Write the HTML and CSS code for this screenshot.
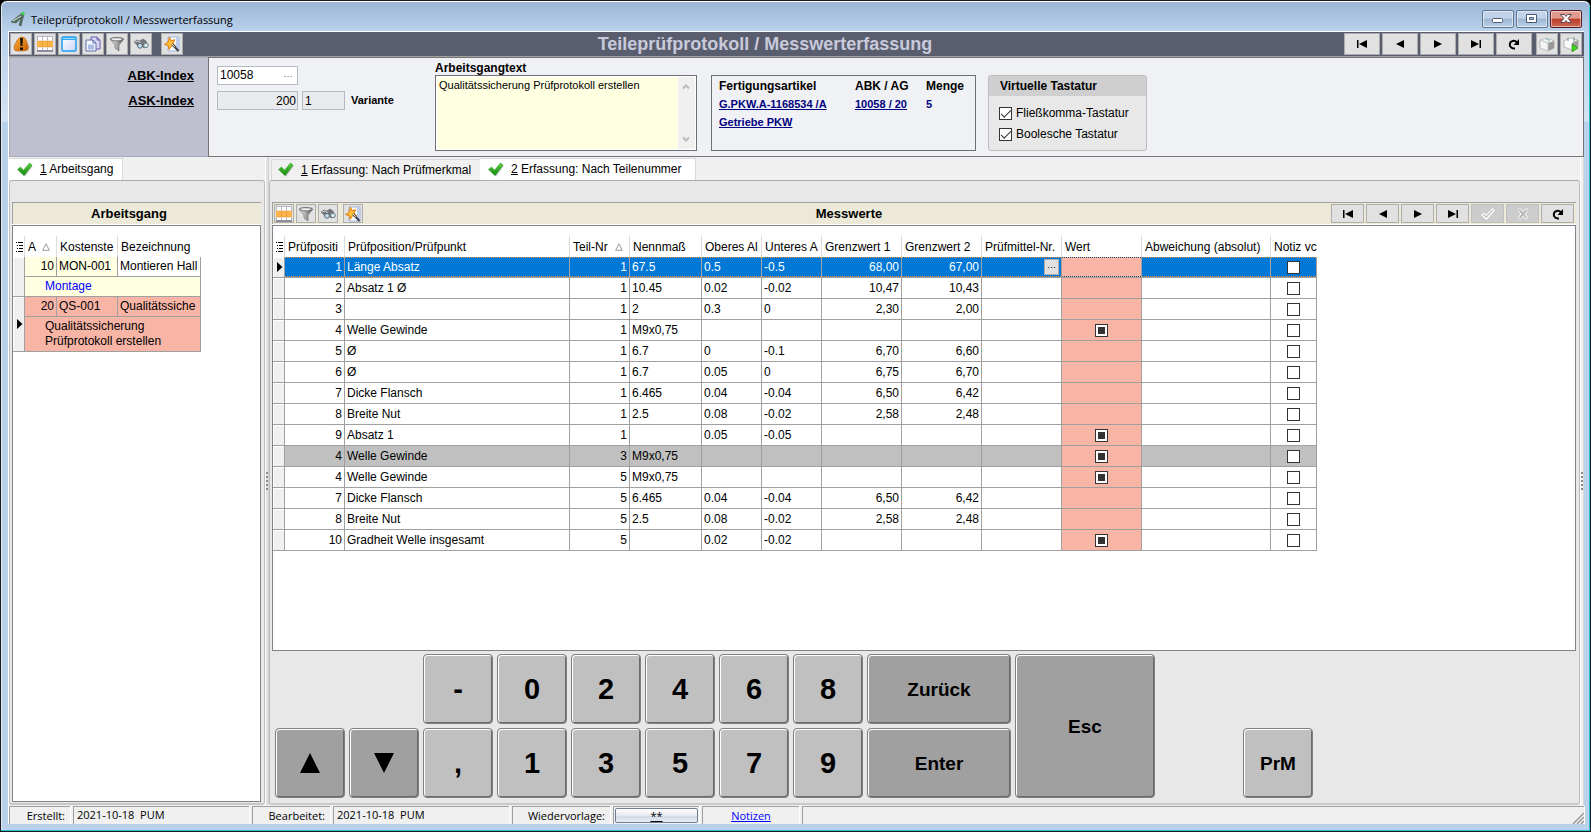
FILE: index.html
```html
<!DOCTYPE html>
<html lang="de">
<head>
<meta charset="utf-8">
<title>Teileprüfprotokoll / Messwerterfassung</title>
<link rel="stylesheet" href="styles.css">
</head>
<body>
<svg class="sprite" aria-hidden="true">
  <defs>
    <linearGradient id="g-orange" x1="0" y1="0" x2="1" y2="1"><stop offset="0" stop-color="#ffb13c"/><stop offset="1" stop-color="#c95c00"/></linearGradient>
    <linearGradient id="g-metal" x1="0" y1="0" x2="1" y2="0"><stop offset="0" stop-color="#f4f4f4"/><stop offset="1" stop-color="#5a5a5a"/></linearGradient>
    <linearGradient id="g-page" x1="0" y1="0" x2="1" y2="1"><stop offset="0" stop-color="#ffffff"/><stop offset="1" stop-color="#c9d6fb"/></linearGradient>
    <linearGradient id="g-check" x1="0" y1="0" x2="0" y2="1"><stop offset="0" stop-color="#5fd045"/><stop offset="1" stop-color="#128a0c"/></linearGradient>
  </defs>
  <symbol id="i-alert" viewBox="0 0 16 16"><path d="M2 14.500C.5 12 1 9.500 3 6.500 4.500 3 6.500 1 9 1c3 0 4 2.500 5 5.500 1 3 2 5 .500 7.500-3.500 1.300-9 1.300-12.500.500z" fill="url(#g-orange)" stroke="#a85a08" stroke-width=".6"/><path d="M7 2h3l-.6 8H7.600zM7 11.500h3V14H7z" fill="#17120a"/></symbol>
  <symbol id="i-table" viewBox="0 0 16 16"><path d="M0 0h16v16H0z" fill="#fff"/><path d="M0 5h16v6H0z" fill="#fdb54a"/><path d="M5.500 5v6M10.500 5v6M0 5h16M0 11h16" stroke="#d88a2c" stroke-width=".7" opacity=".7"/><path d="M.5 0v4.500M5.500 0v4.500M10.500 0v4.500M15.500 0v4.500M.500 11.500V16M5.500 11.500V16M10.500 11.500V16M15.500 11.500V16M0 .500h16" stroke="#b9b5c4" fill="none"/><path d="M0 15h16" stroke="#8f8b99" stroke-width="2"/></symbol>
  <symbol id="i-window" viewBox="0 0 16 16"><rect x="1" y="1" width="14" height="14" rx="1" fill="url(#g-page)" stroke="#1f9cf0" stroke-width="1.500"/><path d="M1 1h14v3H1z" fill="#34a9f6"/><path d="M2 2.500h12" stroke="#9fd8ff"/></symbol>
  <symbol id="i-copy" viewBox="0 0 16 16"><path d="M6 1h6l3 3v9H6z" fill="#d9d7f3" stroke="#6a5da8"/><path d="M12 1v3h3" fill="none" stroke="#6a5da8"/><path d="M1 4h7l3 3v8H1z" fill="#f4f7ff" stroke="#5c6ea6"/><path d="M8 4v3h3" fill="none" stroke="#5c6ea6"/><path d="M3 8.500h6v5H3z" fill="#a9bde3"/></symbol>
  <symbol id="i-funnel" viewBox="0 0 16 16"><path d="M1.500 3.500 6 9v3l4 3V9l4.500-5.500z" fill="url(#g-metal)" stroke="#666" stroke-width=".6"/><ellipse cx="8" cy="3.200" rx="6.600" ry="1.800" fill="#9b9b9b" stroke="#666" stroke-width=".8"/><ellipse cx="7.500" cy="3.200" rx="4.800" ry="1" fill="#ececec"/></symbol>
  <symbol id="i-binoc" viewBox="0 0 16 16"><path d="M1 6 4 4l3 1 3-2 3 2 2 5-4 2-3-3-3 1z" fill="#73777c" stroke="#555" stroke-width=".5"/><path d="m2 6 3-1 3 2" fill="none" stroke="#d5d8db"/><circle cx="7" cy="9.800" r="2.400" fill="#bfe0ef" stroke="#59656c"/><circle cx="13" cy="9.400" r="2.300" fill="#d4edf7" stroke="#6d7a81"/></symbol>
  <symbol id="i-wizard" viewBox="0 0 16 16"><path d="M4 1h11v14H4z" fill="#fbfcff" stroke="#a4b6da"/><path d="M12 1h3v14h-3z" fill="#bdcdf0"/><path d="m5.500 1 1.300 3.600 4-.8-2 3.200 2.600 2.700-3.900.2L5 13.500 4.400 9.600.5 8.500l3.300-1.900z" fill="#ffc03a" stroke="#dc7d0c"/><path d="m8 8 6.500 7" stroke="#3c3f46" stroke-width="2"/><path d="m8 8 2.500 2.700" stroke="#f5f5f5" stroke-width="1"/></symbol>
  <symbol id="i-first" viewBox="0 0 16 16"><path d="M3 4h1.500v8H3zM13 4v8L5 8z"/></symbol>
  <symbol id="i-prev" viewBox="0 0 16 16"><path d="M12 4v8L4 8z"/></symbol>
  <symbol id="i-next" viewBox="0 0 16 16"><path d="M4 4v8l8-4z"/></symbol>
  <symbol id="i-last" viewBox="0 0 16 16"><path d="M3 4v8l8-4zM11.500 4H13v8h-1.500z"/></symbol>
  <symbol id="i-reload" viewBox="0 0 16 16"><path d="M9 12.500C5 13 3.500 10 3.800 8c.5-3 4.500-4.500 7.200-1.500" fill="none" stroke="#000" stroke-width="2"/><path d="M13 3v6H7.500z"/></symbol>
  <symbol id="i-cube" viewBox="0 0 16 16"><path d="m1 4 7-2 7 3v7l-6 3-8-3z" fill="#f4f4f4" stroke="#aaa" stroke-width=".7"/><path d="m9 7 6-2v7l-6 3z" fill="#989898"/><path d="m1 4 8 3v8" fill="none" stroke="#bdbdbd"/><path d="m7 3 3 1v2" stroke="#7fb9c9" fill="none"/></symbol>
  <symbol id="i-cube-run" viewBox="0 0 16 16"><path d="m1 5 6-3 8 2v7l-6 3-8-3z" fill="#fafafa" stroke="#a3a3a3" stroke-width=".7"/><path d="m9 7 6-3v8l-6 2z" fill="#9d9d9d"/><path d="M5 2v3M11 1v5" stroke="#6f9c9a"/><path d="M9 8v8l6-4z" fill="#45d321" stroke="#1f8d12" stroke-width=".7"/></symbol>
  <symbol id="i-tick" viewBox="0 0 16 16"><path d="m1.500 8.500 3-2L7 9l6.500-7.500L15.500 4 8 14.500z" fill="#555" opacity=".4"/><path d="M.5 7.500 3.500 5 6.500 8.300 12.500 1 15 3.300 7 13.500z" fill="url(#g-check)" stroke="#178a12" stroke-width=".5"/></symbol>
  <symbol id="i-ok" viewBox="0 0 16 16"><path d="m2 9 2-1.500L6 10l6.500-7L14 4.500 6.500 13z" fill="none" stroke="#fff" stroke-width="1.300"/><path d="m3 9 1-.500 2 2.500 6.500-7" fill="none" stroke="#aaa" stroke-width=".8"/></symbol>
  <symbol id="i-no" viewBox="0 0 16 16"><path d="m3 4.500 2-2 3 3 3-3 2 2L10 8l3 3.500-2 2-3-3-3 3-2-2L6 8z" fill="#c4c4c4" stroke="#fff"/><path d="m4 4 3 3.500M12 4 5 12" stroke="#aaa" stroke-width=".8"/></symbol>
  <symbol id="i-list" viewBox="0 0 7 10"><path d="M0 .5h1M2 .5h5M1 3.500h1M3 3.500h4M1 6.500h1M3 6.500h4M0 9.500h1M2 9.500h5" stroke="#000"/></symbol>
  <symbol id="i-sort" viewBox="0 0 8 8"><path d="M4 .8 7.300 7.300H.7z" fill="none" stroke="#999"/></symbol>
  <symbol id="i-row" viewBox="0 0 6 10"><path d="M0 0v10l5.500-5z"/></symbol>
</svg>

<div class="window">
  <header class="titlebar">
    <svg class="app-icon" viewBox="0 0 16 16" aria-hidden="true"><path d="M1 11 12 2l2 1-3 12-2-1 2-7-5 5z" fill="#58705f" stroke="#405348" stroke-width=".6"/><path d="m3 10 8-5" stroke="#d8e7dd"/><circle cx="13" cy="2.500" r="1.700" fill="#39d353"/></svg>
    <span class="titlebar-text">Teileprüfprotokoll / Messwerterfassung</span>
    <div class="window-buttons">
      <button class="wbtn" aria-label="Minimieren"><svg viewBox="0 0 30 16"><rect x="9.500" y="7.500" width="10" height="4" rx="1" fill="#fff" stroke="#4b5a70"/></svg></button>
      <button class="wbtn" aria-label="Maximieren"><svg viewBox="0 0 30 16"><path d="M9.500 3.500h10v8h-10zm3 3v2h4v-2z" fill="#fff" fill-rule="evenodd" stroke="#4b5a70"/></svg></button>
      <button class="wbtn wbtn-close" aria-label="Schließen"><svg viewBox="0 0 30 16"><path d="M9.500 3.500h4l1.500 2 1.500-2h4L17 7.500l3.500 4h-4l-1.500-2-1.500 2h-4l3.500-4z" fill="#fff" stroke="#5a4a55"/></svg></button>
    </div>
  </header>

  <div class="client">
    <div class="toolbar">
      <div class="tools">
        <button class="tool" aria-label="Hinweis"><svg><use href="#i-alert"/></svg></button>
        <button class="tool" aria-label="Tabelle"><svg><use href="#i-table"/></svg></button>
        <button class="tool" aria-label="Fenster"><svg><use href="#i-window"/></svg></button>
        <button class="tool" aria-label="Kopieren"><svg><use href="#i-copy"/></svg></button>
        <button class="tool" aria-label="Filter"><svg><use href="#i-funnel"/></svg></button>
        <button class="tool" aria-label="Suchen"><svg><use href="#i-binoc"/></svg></button>
        <button class="tool tool-apart" aria-label="Assistent"><svg><use href="#i-wizard"/></svg></button>
      </div>
      <h1 class="toolbar-title">Teileprüfprotokoll / Messwerterfassung</h1>
      <div class="tools tools-end">
        <button class="tool tool-nav" aria-label="Erster"><svg><use href="#i-first"/></svg></button>
        <button class="tool tool-nav" aria-label="Zurück"><svg><use href="#i-prev"/></svg></button>
        <button class="tool tool-nav" aria-label="Weiter"><svg><use href="#i-next"/></svg></button>
        <button class="tool tool-nav" aria-label="Letzter"><svg><use href="#i-last"/></svg></button>
        <button class="tool tool-nav" aria-label="Aktualisieren"><svg><use href="#i-reload"/></svg></button>
        <button class="tool tool-cube" aria-label="Modul"><svg><use href="#i-cube"/></svg></button>
        <button class="tool" aria-label="Modul starten"><svg><use href="#i-cube-run"/></svg></button>
      </div>
    </div>

    <div class="head">
      <div class="head-labels">
        <label for="abk">ABK-Index</label>
        <label for="ask">ASK-Index</label>
      </div>
      <div class="head-body">
        <div class="index-fields">
          <div class="field-row">
            <div class="lookup"><input id="abk" value="10058"><button aria-label="Auswählen">···</button></div>
          </div>
          <div class="field-row">
            <input id="ask" class="ro ro-num" value="200" readonly>
            <input id="var" class="ro ro-var" value="1" readonly>
            <label for="var" class="var-label">Variante</label>
          </div>
        </div>
        <div class="memo-block">
          <label for="memo">Arbeitsgangtext</label>
          <div class="memo">
            <textarea id="memo">Qualitätssicherung Prüfprotokoll erstellen</textarea>
            <div class="memo-scroll" aria-hidden="true">
              <svg viewBox="0 0 8 6"><path d="m1 4.500 3-3 3 3" fill="none" stroke="#bbb" stroke-width="2"/></svg>
              <svg viewBox="0 0 8 6"><path d="m1 1.500 3 3 3-3" fill="none" stroke="#bbb" stroke-width="2"/></svg>
            </div>
          </div>
        </div>
        <div class="article">
          <span>Fertigungsartikel</span><span>ABK / AG</span><span>Menge</span>
          <a href="#artikel">G.PKW.A-1168534 /A</a><a href="#abk">10058 / 20</a><span class="qty">5</span>
          <a href="#bezeichnung">Getriebe PKW</a>
        </div>
        <fieldset class="vk">
          <legend>Virtuelle Tastatur</legend>
          <label><input type="checkbox" class="cb" checked>Fließkomma-Tastatur</label>
          <label><input type="checkbox" class="cb" checked>Boolesche Tastatur</label>
        </fieldset>
      </div>
    </div>

    <main class="main">
      <section class="side">
        <nav class="tabs"><button class="tab active"><svg><use href="#i-tick"/></svg><span><u>1</u> Arbeitsgang</span></button></nav>
        <div class="page">
          <div class="grid-title"><h2>Arbeitsgang</h2></div>
          <div class="grid-box">
            <table class="grid ops">
              <colgroup><col class="c-ind"><col class="c-a"><col class="c-ks"><col class="c-bez"></colgroup>
              <thead><tr><th class="ind"><svg><use href="#i-list"/></svg></th><th><div class="sorted"><span>A</span><svg><use href="#i-sort"/></svg></div></th><th>Kostenste</th><th class="end">Bezeichnung</th></tr></thead>
              <tbody>
                <tr class="yellow"><td class="ind" rowspan="2"></td><td class="r">10</td><td>MON-001</td><td class="white">Montieren Hall</td></tr>
                <tr class="yellow"><td class="note blue" colspan="3">Montage</td></tr>
                <tr class="red"><td class="ind" rowspan="2"><svg><use href="#i-row"/></svg></td><td class="r">20</td><td>QS-001</td><td>Qualitätssiche</td></tr>
                <tr class="red"><td class="note tall" colspan="3">Qualitätssicherung<br>Prüfprotokoll erstellen</td></tr>
              </tbody>
            </table>
          </div>
        </div>
      </section>

      <div class="splitter"><i></i><i></i><i></i><i></i><i></i></div>

      <section class="work">
        <nav class="tabs">
          <button class="tab"><svg><use href="#i-tick"/></svg><span><u>1</u> Erfassung: Nach Prüfmerkmal</span></button>
          <button class="tab active"><svg><use href="#i-tick"/></svg><span><u>2</u> Erfassung: Nach Teilenummer</span></button>
        </nav>
        <div class="page">
          <div class="grid-title">
            <div class="gtools">
              <button class="gtool" aria-label="Tabelle"><svg><use href="#i-table"/></svg></button>
              <button class="gtool" aria-label="Filter"><svg><use href="#i-funnel"/></svg></button>
              <button class="gtool" aria-label="Suchen"><svg><use href="#i-binoc"/></svg></button>
              <button class="gtool tool-wiz" aria-label="Assistent"><svg><use href="#i-wizard"/></svg></button>
            </div>
            <h2>Messwerte</h2>
            <div class="gtools gtools-end">
              <button class="gtool gnav" aria-label="Erster"><svg><use href="#i-first"/></svg></button>
              <button class="gtool gnav" aria-label="Zurück"><svg><use href="#i-prev"/></svg></button>
              <button class="gtool gnav" aria-label="Weiter"><svg><use href="#i-next"/></svg></button>
              <button class="gtool gnav" aria-label="Letzter"><svg><use href="#i-last"/></svg></button>
              <button class="gtool gnav" aria-label="Übernehmen" disabled><svg><use href="#i-ok"/></svg></button>
              <button class="gtool gnav" aria-label="Verwerfen" disabled><svg><use href="#i-no"/></svg></button>
              <button class="gtool gnav" aria-label="Aktualisieren"><svg><use href="#i-reload"/></svg></button>
            </div>
          </div>
          <div class="grid-box">
            <table class="grid values">
              <colgroup><col class="c-ind"><col class="c60"><col class="c225"><col class="c60"><col class="c72"><col class="c60"><col class="c60"><col class="c80"><col class="c80"><col class="c80"><col class="c80"><col class="c129"><col class="c46"></colgroup>
              <thead><tr><th class="ind"><svg><use href="#i-list"/></svg></th><th>Prüfpositi</th><th>Prüfposition/Prüfpunkt</th><th><div class="sorted"><span>Teil-Nr</span><svg><use href="#i-sort"/></svg></div></th><th>Nennmaß</th><th>Oberes Al</th><th>Unteres A</th><th>Grenzwert 1</th><th>Grenzwert 2</th><th>Prüfmittel-Nr.</th><th>Wert</th><th>Abweichung (absolut)</th><th class="end">Notiz vc</th></tr></thead>
              <tbody>
                <tr class="selected"><td class="ind"><svg><use href="#i-row"/></svg></td><td class="r">1</td><td>Länge Absatz</td><td class="r">1</td><td>67.5</td><td>0.5</td><td>-0.5</td><td class="r">68,00</td><td class="r">67,00</td><td class="pick"><button aria-label="Prüfmittel wählen">···</button></td><td class="wert"></td><td></td><td class="c"><input type="checkbox" class="cb" aria-label="Notiz"></td></tr>
                <tr><td class="ind"></td><td class="r">2</td><td>Absatz 1 Ø</td><td class="r">1</td><td>10.45</td><td>0.02</td><td>-0.02</td><td class="r">10,47</td><td class="r">10,43</td><td></td><td class="wert"></td><td></td><td class="c"><input type="checkbox" class="cb" aria-label="Notiz"></td></tr>
                <tr><td class="ind"></td><td class="r">3</td><td></td><td class="r">1</td><td>2</td><td>0.3</td><td>0</td><td class="r">2,30</td><td class="r">2,00</td><td></td><td class="wert"></td><td></td><td class="c"><input type="checkbox" class="cb" aria-label="Notiz"></td></tr>
                <tr><td class="ind"></td><td class="r">4</td><td>Welle Gewinde</td><td class="r">1</td><td>M9x0,75</td><td></td><td></td><td></td><td></td><td></td><td class="wert"><input type="checkbox" class="cb tri" aria-label="Wert"></td><td></td><td class="c"><input type="checkbox" class="cb" aria-label="Notiz"></td></tr>
                <tr><td class="ind"></td><td class="r">5</td><td>Ø</td><td class="r">1</td><td>6.7</td><td>0</td><td>-0.1</td><td class="r">6,70</td><td class="r">6,60</td><td></td><td class="wert"></td><td></td><td class="c"><input type="checkbox" class="cb" aria-label="Notiz"></td></tr>
                <tr><td class="ind"></td><td class="r">6</td><td>Ø</td><td class="r">1</td><td>6.7</td><td>0.05</td><td>0</td><td class="r">6,75</td><td class="r">6,70</td><td></td><td class="wert"></td><td></td><td class="c"><input type="checkbox" class="cb" aria-label="Notiz"></td></tr>
                <tr><td class="ind"></td><td class="r">7</td><td>Dicke Flansch</td><td class="r">1</td><td>6.465</td><td>0.04</td><td>-0.04</td><td class="r">6,50</td><td class="r">6,42</td><td></td><td class="wert"></td><td></td><td class="c"><input type="checkbox" class="cb" aria-label="Notiz"></td></tr>
                <tr><td class="ind"></td><td class="r">8</td><td>Breite Nut</td><td class="r">1</td><td>2.5</td><td>0.08</td><td>-0.02</td><td class="r">2,58</td><td class="r">2,48</td><td></td><td class="wert"></td><td></td><td class="c"><input type="checkbox" class="cb" aria-label="Notiz"></td></tr>
                <tr><td class="ind"></td><td class="r">9</td><td>Absatz 1</td><td class="r">1</td><td></td><td>0.05</td><td>-0.05</td><td></td><td></td><td></td><td class="wert"><input type="checkbox" class="cb tri" aria-label="Wert"></td><td></td><td class="c"><input type="checkbox" class="cb" aria-label="Notiz"></td></tr>
                <tr class="gray"><td class="ind"></td><td class="r">4</td><td>Welle Gewinde</td><td class="r">3</td><td>M9x0,75</td><td></td><td></td><td></td><td></td><td></td><td class="wert"><input type="checkbox" class="cb tri" aria-label="Wert"></td><td></td><td class="c"><input type="checkbox" class="cb" aria-label="Notiz"></td></tr>
                <tr><td class="ind"></td><td class="r">4</td><td>Welle Gewinde</td><td class="r">5</td><td>M9x0,75</td><td></td><td></td><td></td><td></td><td></td><td class="wert"><input type="checkbox" class="cb tri" aria-label="Wert"></td><td></td><td class="c"><input type="checkbox" class="cb" aria-label="Notiz"></td></tr>
                <tr><td class="ind"></td><td class="r">7</td><td>Dicke Flansch</td><td class="r">5</td><td>6.465</td><td>0.04</td><td>-0.04</td><td class="r">6,50</td><td class="r">6,42</td><td></td><td class="wert"></td><td></td><td class="c"><input type="checkbox" class="cb" aria-label="Notiz"></td></tr>
                <tr><td class="ind"></td><td class="r">8</td><td>Breite Nut</td><td class="r">5</td><td>2.5</td><td>0.08</td><td>-0.02</td><td class="r">2,58</td><td class="r">2,48</td><td></td><td class="wert"></td><td></td><td class="c"><input type="checkbox" class="cb" aria-label="Notiz"></td></tr>
                <tr><td class="ind"></td><td class="r">10</td><td>Gradheit Welle insgesamt</td><td class="r">5</td><td></td><td>0.02</td><td>-0.02</td><td></td><td></td><td></td><td class="wert"><input type="checkbox" class="cb tri" aria-label="Wert"></td><td></td><td class="c"><input type="checkbox" class="cb" aria-label="Notiz"></td></tr>
              </tbody>
            </table>
          </div>
          <div class="keypad">
            <button class="key k-first">-</button><button class="key">0</button><button class="key">2</button><button class="key">4</button><button class="key">6</button><button class="key">8</button><button class="key dark word">Zurück</button><button class="key dark word k-esc">Esc</button>
            <button class="key dark k-up" aria-label="Hoch"><svg viewBox="0 0 20 20"><path d="M10 0 20 20H0z"/></svg></button><button class="key dark" aria-label="Runter"><svg viewBox="0 0 20 20"><path d="M0 0h20L10 20z"/></svg></button><button class="key">,</button><button class="key">1</button><button class="key">3</button><button class="key">5</button><button class="key">7</button><button class="key">9</button><button class="key dark word">Enter</button><button class="key word k-prm">PrM</button>
          </div>
        </div>
      </section>
      <div class="splitter splitter-end"><i></i><i></i><i></i><i></i><i></i></div>
    </main>

    <footer class="status">
      <span class="s-label s1">Erstellt:</span>
      <span class="s-value">2021-10-18&nbsp; PUM</span>
      <span class="s-label s2">Bearbeitet:</span>
      <span class="s-value">2021-10-18&nbsp; PUM</span>
      <span class="s-label s3">Wiedervorlage:</span>
      <span class="s-btn"><button>**</button></span>
      <span class="s-link"><a href="#notizen">Notizen</a></span>
      <span class="s-rest"><svg viewBox="0 0 12 12"><path d="M1 12 12 1M5 12l7-7M9 12l3-3" stroke="#999" stroke-width="1.500"/></svg></span>
    </footer>
  </div>
</div>
</body>
</html>
```
FILE: styles.css
```css
* { box-sizing: border-box; }

body {
  margin: 0;
  background: #000;
  color: #000;
  font: 12px/15px "Liberation Sans", Arial, sans-serif;
}

button, input, textarea { font: inherit; color: inherit; margin: 0; }
button { padding: 0; }
h1, h2 { margin: 0; }
.sprite { position: absolute; width: 0; height: 0; }

/* window frame */
.window {
  display: flex;
  flex-direction: column;
  min-height: 100vh;
  padding: 0 6px 7px 7px;
  border: 1px solid #1a1a1a;
  border-radius: 7px 7px 0 0;
  box-shadow: inset 0 1px #fff, inset -1px -1px #22c4d8, inset 1px 0 #dce9f6;
  background: linear-gradient(#9ab4d4, #b9d1ea 30px, #d5e3f3 120px, #b9d1ea 121px);
}

.titlebar {
  display: flex;
  align-items: center;
  height: 30px;
  padding: 6px 2px 0;
  font: 11px/16px "Open Sans", "Noto Sans", sans-serif;
}
.titlebar-text { margin-top: 2px; }
.app-icon { width: 16px; height: 16px; margin-right: 5px; }
.window-buttons { display: flex; gap: 2px; margin-left: auto; }
.wbtn {
  display: block;
  width: 32px;
  height: 18px;
  border: 1px solid #5f7793;
  border-radius: 2px;
  box-shadow: inset 0 0 0 1px rgba(255, 255, 255, .5);
  background: linear-gradient(#c1d3e8 45%, #9db5d1 50%, #bcd2ea);
}
.wbtn svg { display: block; width: 30px; height: 16px; }
.wbtn-close { border-color: #5a1a20; background: linear-gradient(#e09b8e 45%, #bb3a28 50%, #cc6a55); }

.client {
  display: flex;
  flex: 1;
  flex-direction: column;
  border: solid #fff;
  border-width: 1px 0 0 1px;
  background: #f0f0f0;
}

/* main toolbar */
.toolbar {
  display: flex;
  align-items: center;
  height: 25px;
  padding: 0 2px 0 1px;
  border-bottom: 1px solid #a0a0a0;
  background: #5a5d6d;
}
.toolbar-title {
  flex: 1;
  padding-right: 60px;
  color: #c8cadb;
  font-size: 18px;
  line-height: 24px;
  text-align: center;
}
.tools { display: flex; flex: 0 0 236px; gap: 2px; }
.tools-end { justify-content: flex-end; }
.tool {
  display: flex;
  align-items: center;
  justify-content: center;
  width: 22px;
  height: 22px;
  border: 1px solid #adadad;
  background: #e1e1e1;
}
.tool svg, .gtool svg { width: 16px; height: 16px; }
.tool-apart { margin-left: 7px; }
.tool-nav { width: 36px; }
.tool-cube { margin-left: 2px; }

/* header area */
.head { display: flex; min-height: 100px; }
.head-labels {
  display: flex;
  flex: 0 0 199px;
  flex-direction: column;
  gap: 9px;
  padding: 10px 14px 0 0;
  border: 1px solid #a9a9bb;
  border-right: 0;
  background: #bebfcf;
  font-size: 13px;
  font-weight: bold;
  line-height: 16px;
  text-align: right;
  text-decoration: underline;
}
.head-body {
  display: flex;
  flex: 1;
  align-items: flex-start;
  border: 1px solid #747474;
  background: #f0f1f4;
}
.index-fields { display: flex; flex: 0 0 226px; flex-direction: column; gap: 6px; padding: 8px 0 0 8px; }
.field-row { display: flex; align-items: center; gap: 4px; }
.lookup { display: flex; width: 81px; height: 19px; border: 1px solid #b4b8c0; background: #fff; }
.lookup input { flex: 1; min-width: 0; border: 0; padding: 0 2px; background: none; }
.lookup button { width: 18px; border: 0; background: none; color: #555; font-size: 9px; line-height: 12px; }
.ro { height: 19px; border: 1px solid #b4b8c0; padding: 0 2px; background: #e9eaed; }
.ro-num { width: 81px; padding: 0 1px; text-align: right; }
.ro-var { width: 43px; }
.var-label { margin-left: 2px; font-size: 11px; font-weight: bold; }

.memo-block { display: flex; flex-direction: column; flex: 0 0 262px; padding-top: 3px; }
.memo-block label { font-weight: bold; line-height: 14px; }
.memo { display: flex; height: 76px; padding: 1px; border: 1px solid #6f6f78; background: #fff; }
.memo textarea {
  flex: 1;
  min-width: 0;
  border: 0;
  padding: 2px;
  background: #ffffe1;
  font-size: 11px;
  line-height: 13px;
  resize: none;
  overflow: hidden;
}
.memo-scroll { display: flex; flex-direction: column; justify-content: space-between; width: 17px; padding: 7px 4px; background: #f0f0f0; }
.memo-scroll svg { width: 8px; height: 6px; }

.article {
  display: grid;
  grid-template-columns: 136px 71px auto;
  align-content: start;
  row-gap: 3px;
  width: 265px;
  height: 76px;
  margin: 17px 12px 0 14px;
  padding: 3px 7px;
  border: 1px solid #6f6f78;
  font-weight: bold;
}
.article a, .qty { justify-self: start; color: #000080; font-size: 11px; white-space: nowrap; }

.vk {
  display: flex;
  flex-direction: column;
  gap: 6px;
  width: 159px;
  height: 76px;
  margin: 17px 0 0;
  padding: 0 10px;
  border: 1px solid #bdbdbd;
  border-radius: 3px;
  background: linear-gradient(#cfcfcf 20px, #e8e8e8 20px);
}
.vk legend { float: left; height: 20px; margin-bottom: 4px; padding: 0 1px; font-weight: bold; line-height: 20px; }
.vk label { display: flex; align-items: center; gap: 4px; white-space: nowrap; }

.cb {
  display: inline-block;
  flex: none;
  appearance: none;
  width: 13px;
  height: 13px;
  border: 1px solid #333;
  background: #fff;
  vertical-align: middle;
}
.cb:checked::after {
  content: "";
  display: block;
  width: 9px;
  height: 4px;
  margin: 2px 0 0 1px;
  border: solid #333;
  border-width: 0 0 1px 1px;
  transform: rotate(-45deg);
}
.tri::after { content: ""; display: block; width: 7px; height: 7px; margin: 2px; background: #333; }

/* tabbed area */
.main { display: flex; flex: 1; }
.side { display: flex; flex: 0 0 256px; flex-direction: column; }
.work { display: flex; flex: 1; flex-direction: column; min-width: 0; }
.tabs { display: flex; align-items: flex-end; height: 23px; background: #f0f0f0; }
.tab {
  display: flex;
  align-items: center;
  min-width: 209px;
  height: 21px;
  padding: 0 6px;
  border: solid #d9d9d9;
  border-width: 1px 0 0 1px;
  background: #f0f0f0;
  white-space: pre;
}
.tab svg { width: 16px; height: 16px; margin-right: 7px; }
.tab.active { min-width: 216px; height: 22px; padding: 0 8px; border-width: 1px 1px 0 0; background: #fff; }
.side .tab.active { min-width: 114px; }
.work .tabs { padding-left: 2px; }
.page {
  display: flex;
  flex: 1;
  flex-direction: column;
  padding: 21px 3px 3px 2px;
  border: 1px solid;
  border-width: 1px 1px 2px;
  border-color: #acacac #bcbcbc #c8c8c8;
  border-radius: 3px;
  background: #e8e8e8;
}
.side .page { padding-bottom: 1px; }
.splitter {
  display: flex;
  flex: 0 0 4px;
  flex-direction: column;
  align-items: center;
  justify-content: center;
  gap: 2px;
  border-right: 1px solid #cdd2d8;
  border-left: 1px solid #fff;
  background: #e2e2e2;
}
.splitter i { width: 2px; height: 2px; background: #888; }
.splitter-end { border-right-color: #d8d8d8; background: #f0f0f0; }

.grid-title {
  display: flex;
  align-items: center;
  height: 22px;
  border: solid #a0a0a0;
  border-width: 1px 0 0 1px;
  box-shadow: 0 1px #fff;
  background: #ece9d8;
}
.grid-title h2 { flex: 1; padding-right: 24px; font-size: 13px; line-height: 20px; text-align: center; }
.side .grid-title h2 { padding-right: 16px; }
.gtools { display: flex; flex: 0 0 118px; gap: 2px; padding-left: 1px; }
.gtools-end { flex-basis: 245px; padding: 0 2px 0 0; }
.gtool {
  display: flex;
  align-items: center;
  justify-content: center;
  width: 20px;
  height: 19px;
  border: 1px solid #adadad;
  background: #e1e1e1;
}
.tool-wiz { margin-left: 3px; }
.gnav { flex: 0 0 33px; }
.gtool:disabled { border-color: #bfbfbf; background: #ccc; }
.grid-box { flex: 1; margin-top: 1px; padding-top: 10px; border: 1px solid #82838d; background: #fff; overflow: hidden; }

/* data grids */
.grid { border-spacing: 0; table-layout: fixed; width: 1px; }
.c-ind { width: 12px; }
.c-a { width: 32px; }
.c-ks { width: 61px; }
.c-bez { width: 83px; }
.c46 { width: 46px; }
.c60 { width: 60px; }
.c72 { width: 72px; }
.c80 { width: 80px; }
.c129 { width: 129px; }
.c225 { width: 225px; }
.grid th {
  height: 21px;
  padding: 1px 0 0 3px;
  border-right: 1px solid #dcdcdc;
  font-weight: normal;
  text-align: left;
  white-space: nowrap;
}
.grid th.end { border-right-color: transparent; }
.grid td {
  height: 21px;
  padding: 0 2px;
  border: solid #a0a0a0;
  border-width: 0 1px 1px 0;
  white-space: nowrap;
}
.ops td { height: 20px; }
.grid .r { text-align: right; }
.grid .c, .grid .wert { padding: 0; text-align: center; line-height: 13px; }
.grid th.ind { padding: 1px 0 0; }
.grid th.ind svg { display: block; width: 7px; height: 10px; margin-left: 3px; }
.grid td.ind { padding: 0; background: #f0f0f0; box-shadow: inset 1px 1px #fff; }
.grid td.ind svg { display: block; width: 6px; height: 10px; margin-left: 4px; }
.sorted { display: flex; align-items: center; justify-content: space-between; padding-right: 6px; }
.sorted svg { flex: none; width: 8px; height: 8px; }
.yellow td:not(.ind) { background: #ffffe1; }
.yellow td.white { background: #fff; }
.red td:not(.ind) { background: #f8b5a6; }
.grid td.note { padding-left: 20px; }
.grid td.tall { height: 35px; }
.blue { color: #00f; }
.grid td.wert { background: #f8b5a6; }
.gray td:not(.ind):not(.wert) { background: #c0c0c0; }

/* focused row: dotted line along the upper and lower edge */
.selected td:not(.ind) {
  --dot: #ee8a30;
  --fill: #0078d7;
  background:
    repeating-linear-gradient(90deg, var(--dot) 0 1px, transparent 1px 2px) top / 100% 1px no-repeat,
    repeating-linear-gradient(90deg, var(--dot) 0 1px, transparent 1px 2px) bottom / 100% 1px no-repeat,
    var(--fill);
  background-clip: padding-box;
  background-origin: padding-box;
  color: #fff;
}
.grid .selected td.wert { --dot: #1a4a6a; --fill: #f8b5a6; }
.grid .pick { padding: 0 2px; }
.pick button { display: block; width: 15px; height: 16px; margin-left: auto; border: 1px solid #adadad; background: #e1e1e1; color: #000; font-size: 9px; line-height: 10px; }

/* on-screen keys */
.keypad {
  display: grid;
  grid-template-columns: repeat(8, 70px) 144px 140px 80px 70px;
  grid-template-rows: 70px 70px;
  gap: 4px;
  padding: 3px 0 2px 3px;
}
.key {
  border: 1px solid #808080;
  border-radius: 4px;
  box-shadow: inset 1px 1px #fff, inset -1px -1px #6a6a6a;
  background: #c0c0c0;
  font-size: 29px;
  font-weight: bold;
}
.key svg { display: block; width: 20px; height: 20px; margin: auto; }
.dark { background: #a0a0a0; }
.word { font-size: 19px; }
.k-first { grid-column: 3; }
.k-esc { grid-row: 1 / 3; grid-column: 10; }
.k-up { grid-column: 1; }
.k-prm { grid-column: 12; }

/* status bar */
.status { display: flex; gap: 3px; margin-top: 1px; font: 11px/15px "Open Sans", "Noto Sans", sans-serif; }
.status > span { height: 18px; border: solid #a0a0a0; border-width: 1px 0 0 1px; box-shadow: 1px 0 #fff; }
.s-label { padding: 1px 5px 0 0; text-align: right; }
.s1 { width: 61px; }
.s2 { width: 78px; }
.s3 { width: 98px; }
.s-value { width: 176px; padding-left: 3px; }
.s-btn { width: 86px; padding: 1px; }
.s-btn button {
  display: block;
  width: 100%;
  height: 15px;
  border: 1px solid #707f92;
  border-radius: 2px;
  background: linear-gradient(#fff, #e6eaf0 50%, #d3dae4 55%, #e8edf3);
  line-height: 12px;
  text-decoration: underline;
}
.s-link { width: 97px; padding-top: 1px; text-align: center; }
.s-link a { color: #00f; }
.s-rest { display: flex; flex: 1; align-items: flex-end; justify-content: flex-end; }
.s-rest svg { width: 12px; height: 12px; }
```
